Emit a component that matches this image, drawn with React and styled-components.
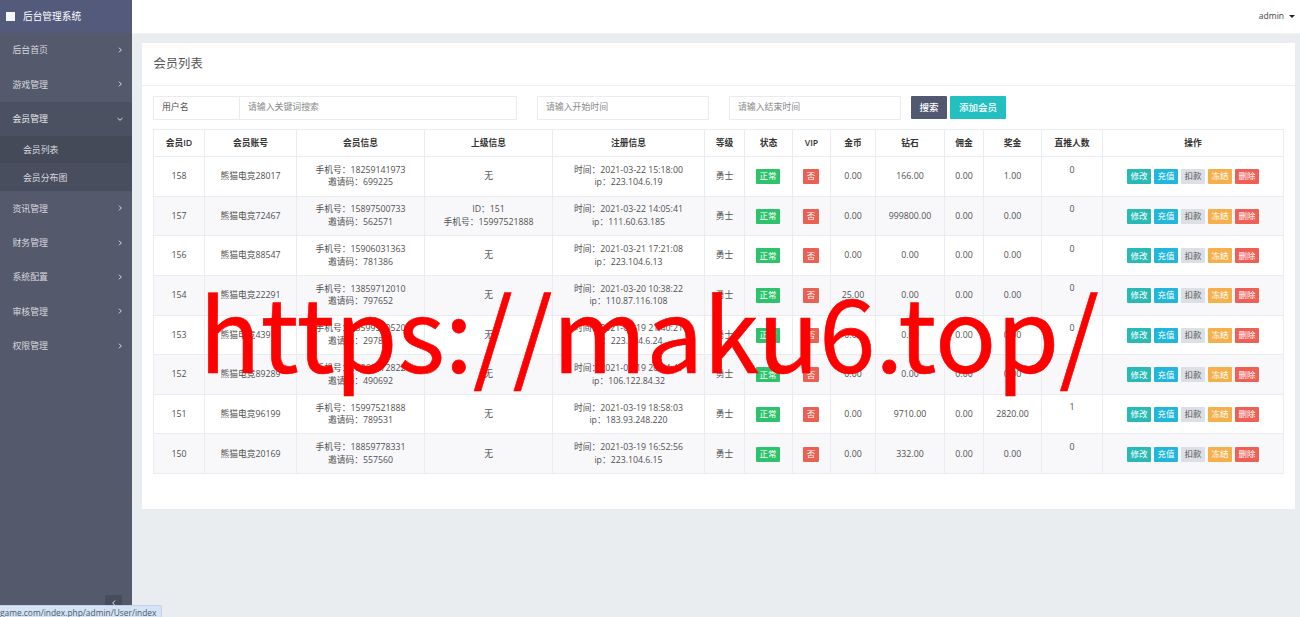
import { Fragment } from "react";
import styled, { createGlobalStyle } from "styled-components";

const GlobalStyle = createGlobalStyle`
    * {
        box-sizing: border-box;
    }
    body {
        margin: 0;
        overflow: hidden;
        background: #e9edf0;
        font-family: 'Open Sans', 'Noto Sans CJK SC', sans-serif;
        font-size: 8.75px;
        color: #555;
    }
`

const Page = styled.div`
    display: flex;
    height: 617px;
    overflow: hidden;
    position: relative;
`

const Sidebar = styled.aside`
    width: 132px;
    flex: none;
    display: flex;
    flex-direction: column;
    background: #545a6c;
    color: #d6d8df;
`

const Brand = styled.div`
    height: 32.8px;
    flex: none;
    display: flex;
    align-items: center;
    gap: 8px;
    padding-left: 6px;
    background: #535a7c;
    color: #fff;
    font-size: 9.7px;
`

const Logo = styled.span`
    width: 9px;
    height: 9px;
    background: #f6f6fa;
`

const MenuItem = styled.div`
    height: 34.4px;
    flex: none;
    display: flex;
    align-items: center;
    justify-content: space-between;
    padding: 0 8px 0 12.5px;
    background: ${props => props.$open ? '#4c5162' : 'transparent'};
    color: ${props => props.$open ? '#e6e7ec' : 'inherit'};
    font-size: 8.9px;
`

const SubItem = styled.div`
    height: 27.5px;
    flex: none;
    display: flex;
    align-items: center;
    padding-left: 23px;
    background: ${props => props.$active ? '#454a59' : '#494e5e'};
    font-size: 8.9px;
`

const Collapse = styled.div`
    width: 17px;
    height: 14px;
    margin: auto 10px 8px auto;
    display: flex;
    align-items: center;
    justify-content: center;
    padding-top: 2px;
    background: #484d5d;
`

const Main = styled.main`
    flex: 1;
    min-width: 0;
`

const TopBar = styled.header`
    height: 34px;
    display: flex;
    align-items: center;
    justify-content: flex-end;
    gap: 5px;
    padding: 0 5px 2px 0;
    background: #fff;
    border-bottom: 1px solid #f0f2f4;
    color: #444;
    font-size: 8.5px;
`

const Caret = styled.span`
    margin-top: 2px;
    border: 3px solid transparent;
    border-top: 3px solid #222;
    border-bottom: 0;
`

const Card = styled.section`
    height: 466px;
    margin: 9px 5px 0 10px;
    background: #fff;
`

const CardHead = styled.h1`
    height: 43px;
    margin: 0;
    padding: 0 0 2px 11.5px;
    display: flex;
    align-items: center;
    border-bottom: 1px solid #eceef0;
    font-weight: 400;
    font-size: 12.3px;
    color: #555;
`

const Toolbar = styled.div`
    display: flex;
    align-items: center;
    height: 23px;
    margin: 10px 0 10px 11px;
`

const Field = styled.div`
    width: ${props => props.$width}px;
    height: 24px;
    margin-right: ${props => props.$gap || 0}px;
    padding: 0 8px 2px;
    display: flex;
    align-items: center;
    border: 1px solid #e9ebee;
    border-left-width: ${props => props.$joined ? 0 : 1}px;
    color: ${props => props.$filled ? '#555' : '#888'};
    font-size: 8.9px;
`

const Button = styled.button`
    width: ${props => props.$width}px;
    height: 23px;
    margin: 0 3px 0 0;
    padding: 0 0 1px;
    border: 0;
    border-radius: 1px;
    background: ${props => props.$color};
    color: #fff;
    font: inherit;
    font-size: 9.5px;
    font-weight: 500;
`

const Table = styled.div`
    width: 1131px;
    margin-left: 11px;
    border: solid #eaecf0;
    border-width: 1px 0 0 1px;
`

const Row = styled.div`
    display: grid;
    grid-template-columns: 51px 92px 128px 128px 152px 40px 48px 38px 45px 69px 39px 58px 61px 1fr;
    height: ${props => props.$head ? 27 : 39.65}px;
    background: ${props => props.$striped ? '#f8f8fb' : '#fff'};
    font-weight: ${props => props.$head ? 600 : 400};
    color: ${props => props.$head ? '#333' : '#505050'};
`

const Cell = styled.div`
    display: flex;
    flex-direction: column;
    align-items: center;
    justify-content: ${props => props.$top ? 'flex-start' : 'center'};
    padding: ${props => props.$top ? 6.5 : 0.2}px ${props => props.$tag ? 1 : 0}px 0 0;
    border: solid #eaecf0;
    border-width: 0 1px 1px 0;
    line-height: 12.6px;
    white-space: nowrap;
`

const Actions = styled.div`
    display: flex;
    gap: 3px;
`

const Tag = styled.span`
    display: flex;
    align-items: center;
    justify-content: center;
    width: ${props => props.$small ? 16 : 24}px;
    height: 15px;
    margin-top: 0.6px;
    border-radius: 1px;
    background: ${props => props.$color};
    color: ${props => props.$dark ? '#555' : '#fff'};
    font-size: 8.5px;
`

const StatusBar = styled.div`
    position: absolute;
    left: 0;
    bottom: 0;
    width: 162px;
    height: 12px;
    overflow: hidden;
    background: #d5e3f6;
    border: solid #c3d1e6;
    border-width: 1px 1px 0 0;
    border-radius: 0 2px 0 0;
    color: #4c5868;
    font-size: 8.4px;
    line-height: 14px;
    white-space: nowrap;
`

const Watermark = styled.div`
    position: absolute;
    left: 199px;
    top: 249px;
    color: #fe0000;
    font-family: 'Noto Sans CJK SC', sans-serif;
    font-size: 101.3px;
    -webkit-text-stroke: 0.6px #fe0000;
    line-height: 160px;
    white-space: nowrap;
`

const menu = [
    { name: '后台首页' },
    { name: '游戏管理' },
    { name: '会员管理', children: ['会员列表', '会员分布图'] },
    { name: '资讯管理' },
    { name: '财务管理' },
    { name: '系统配置' },
    { name: '审核管理' },
    { name: '权限管理' },
]

const columns = ['会员ID', '会员账号', '会员信息', '上级信息', '注册信息', '等级', '状态', 'VIP', '金币', '钻石', '佣金', '奖金', '直推人数', '操作']

const users = [
    { id: 158, name: '熊猫电竞28017', phone: '18259141973', code: '699225', time: '2021-03-22 15:18:00', ip: '223.104.6.19', gold: '0.00', diamond: '166.00', bonus: '1.00', invited: 0 },
    { id: 157, name: '熊猫电竞72467', phone: '15897500733', code: '562571', parent: ['ID：151', '手机号：15997521888'], time: '2021-03-22 14:05:41', ip: '111.60.63.185', gold: '0.00', diamond: '999800.00', bonus: '0.00', invited: 0 },
    { id: 156, name: '熊猫电竞88547', phone: '15906031363', code: '781386', time: '2021-03-21 17:21:08', ip: '223.104.6.13', gold: '0.00', diamond: '0.00', bonus: '0.00', invited: 0 },
    { id: 154, name: '熊猫电竞22291', phone: '13859712010', code: '797652', time: '2021-03-20 10:38:22', ip: '110.87.116.108', gold: '25.00', diamond: '0.00', bonus: '0.00', invited: 0 },
    { id: 153, name: '熊猫电竞43976', phone: '13599590520', code: '297831', time: '2021-03-19 21:40:21', ip: '223.104.6.24', gold: '0.00', diamond: '0.00', bonus: '0.00', invited: 0 },
    { id: 152, name: '熊猫电竞89289', phone: '13860172822', code: '490692', time: '2021-03-19 20:04:41', ip: '106.122.84.32', gold: '0.00', diamond: '0.00', bonus: '0.00', invited: 0 },
    { id: 151, name: '熊猫电竞96199', phone: '15997521888', code: '789531', time: '2021-03-19 18:58:03', ip: '183.93.248.220', gold: '0.00', diamond: '9710.00', bonus: '2820.00', invited: 1 },
    { id: 150, name: '熊猫电竞20169', phone: '18859778331', code: '557560', time: '2021-03-19 16:52:56', ip: '223.104.6.15', gold: '0.00', diamond: '332.00', bonus: '0.00', invited: 0 },
]

const actions = [
    { label: '修改', color: '#29bab6' },
    { label: '充值', color: '#22b7da' },
    { label: '扣款', color: '#dce0e6', dark: true },
    { label: '冻结', color: '#f5b04b' },
    { label: '删除', color: '#ee6055' },
]

const Chevron = ({ d }) => (
    <svg width="8" height="8" viewBox="0 0 8 8" fill="none" stroke="#d9dbe2" strokeWidth="1">
        <path d={d} />
    </svg>
)

const UserRow = ({ user, striped }) => (
    <Row $striped={striped}>
        <Cell>{user.id}</Cell>
        <Cell>{user.name}</Cell>
        <Cell>
            <span>手机号：{user.phone}</span>
            <span>邀请码：{user.code}</span>
        </Cell>
        <Cell>{user.parent ? user.parent.map(line => <span key={line}>{line}</span>) : '无'}</Cell>
        <Cell>
            <span>时间：{user.time}</span>
            <span>ip：{user.ip}</span>
        </Cell>
        <Cell>勇士</Cell>
        <Cell $tag><Tag $color="#2dc26b">正常</Tag></Cell>
        <Cell $tag><Tag $color="#ea6153" $small>否</Tag></Cell>
        <Cell>{user.gold}</Cell>
        <Cell>{user.diamond}</Cell>
        <Cell>0.00</Cell>
        <Cell>{user.bonus}</Cell>
        <Cell $top>{user.invited}</Cell>
        <Cell>
            <Actions>
                {actions.map(a => <Tag key={a.label} $color={a.color} $dark={a.dark}>{a.label}</Tag>)}
            </Actions>
        </Cell>
    </Row>
)

const App = () => {
    return (
        <Page>
            <GlobalStyle />
            <Sidebar>
                <Brand><Logo />后台管理系统</Brand>
                {menu.map(item => (
                    <Fragment key={item.name}>
                        <MenuItem $open={!!item.children}>
                            {item.name}
                            <Chevron d={item.children ? 'M1.5 3 L4 5.3 L6.5 3' : 'M3 1.7 L5.3 4 L3 6.3'} />
                        </MenuItem>
                        {item.children?.map((child, i) => (
                            <SubItem key={child} $active={i === 0}>{child}</SubItem>
                        ))}
                    </Fragment>
                ))}
                <Collapse><Chevron d="M5 1.5 L2.7 4 L5 6.5" /></Collapse>
            </Sidebar>
            <Main>
                <TopBar>admin <Caret /></TopBar>
                <Card>
                    <CardHead>会员列表</CardHead>
                    <Toolbar>
                        <Field $width={87} $filled>用户名</Field>
                        <Field $width={277} $gap={20} $joined>请输入关键词搜索</Field>
                        <Field $width={172} $gap={20}>请输入开始时间</Field>
                        <Field $width={172} $gap={10}>请输入结束时间</Field>
                        <Button $width={36} $color="#525870">搜索</Button>
                        <Button $width={56} $color="#23bfc1">添加会员</Button>
                    </Toolbar>
                    <Table>
                        <Row $head>
                            {columns.map(name => <Cell key={name}>{name}</Cell>)}
                        </Row>
                        {users.map((user, i) => <UserRow key={user.id} user={user} striped={i % 2 === 1} />)}
                    </Table>
                </Card>
            </Main>
            <StatusBar>game.com/index.php/admin/User/index</StatusBar>
            <Watermark>https://maku6.top/</Watermark>
        </Page>
     );
}

export default App;
